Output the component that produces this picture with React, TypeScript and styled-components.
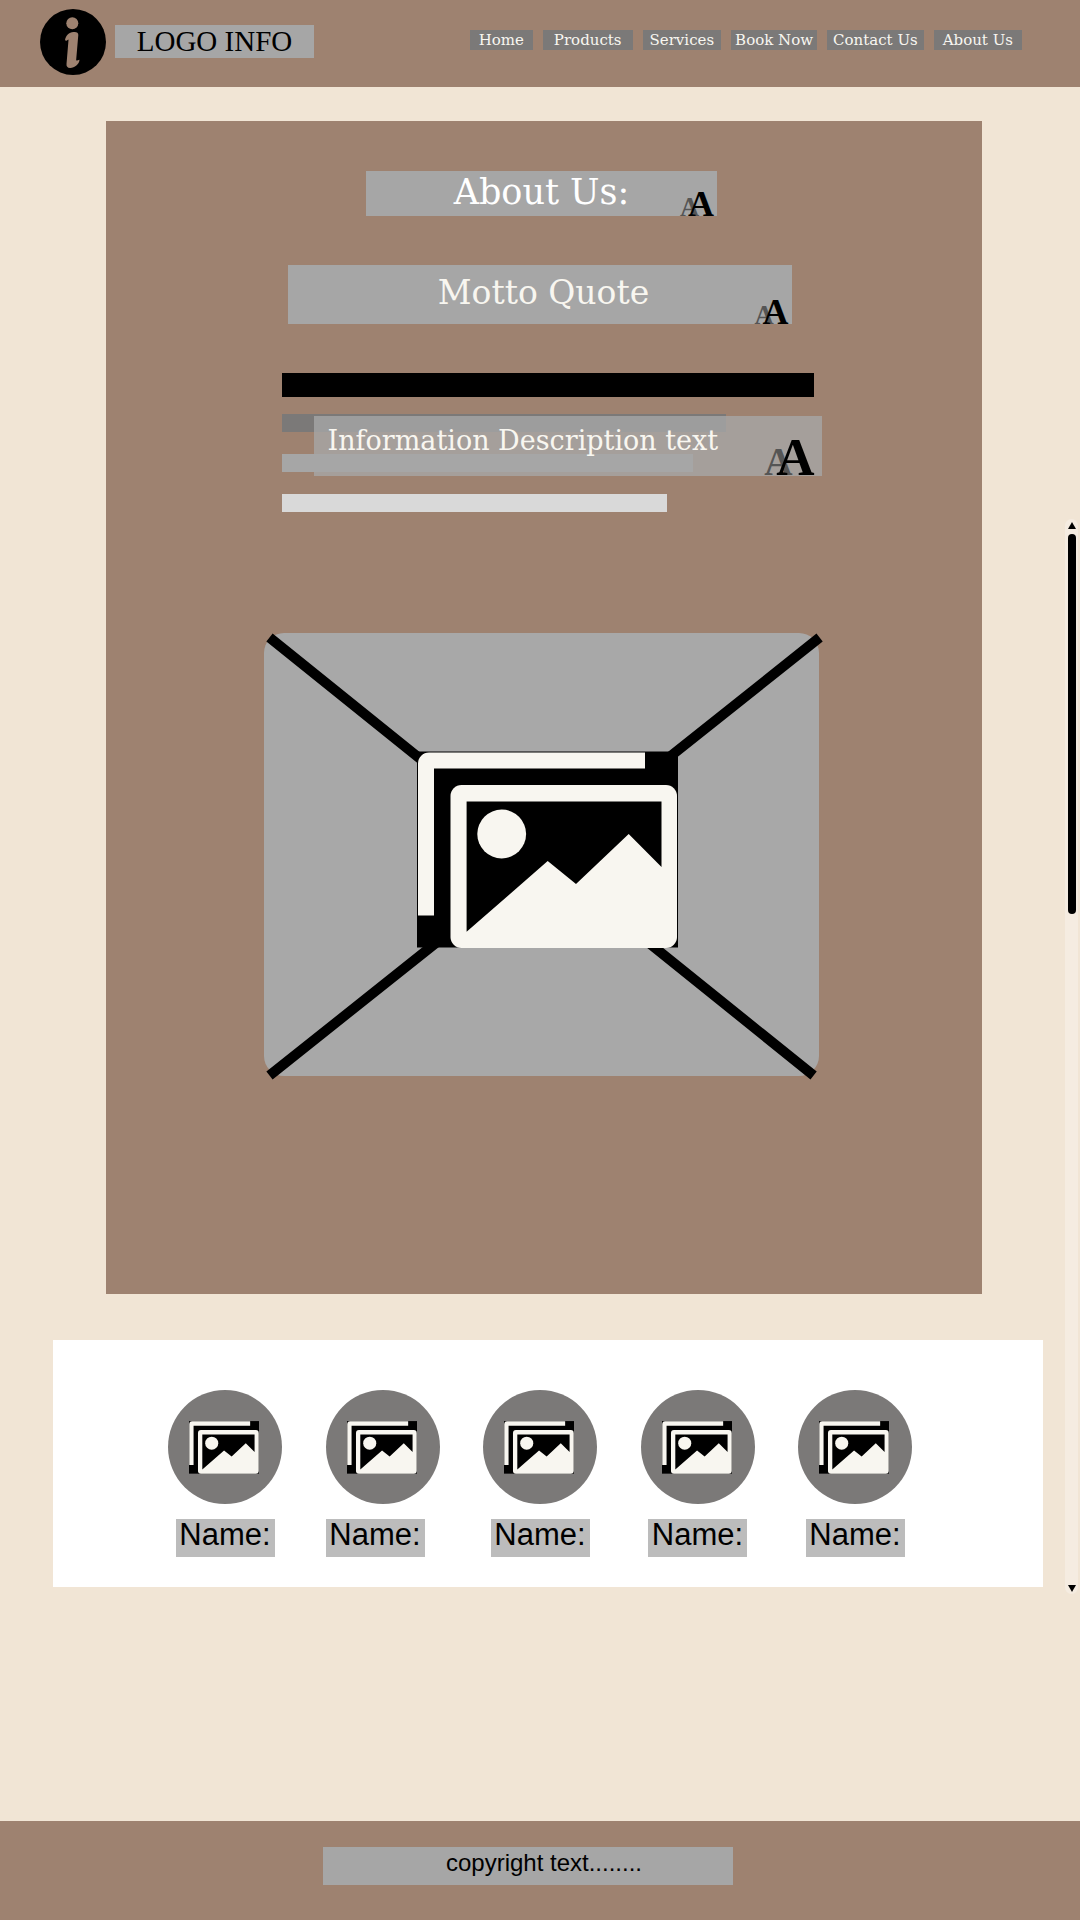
import React from "react";
import styled, { createGlobalStyle } from "styled-components";

const brown = "#9e8270";
const cream = "#f1e5d5";
const grey = "#a6a6a6";
const darkGrey = "#7b7978";
const ivory = "#f8f6f0";
const serif = `"DejaVu Serif", "Liberation Serif", serif`;
const sans = `"Liberation Sans", Arial, sans-serif`;

const GlobalStyle = createGlobalStyle`
  *, *::before, *::after { box-sizing: border-box; }
  body { margin: 0; background: ${cream}; font-family: ${serif}; }
  h1, h2, p, ul, figure { margin: 0; padding: 0; font-weight: 400; }
`;

const Page = styled.div`
  display: flex;
  flex-direction: column;
  min-height: 100vh;
`;

const Header = styled.header`
  display: flex;
  align-items: center;
  justify-content: space-between;
  height: 87px;
  padding: 0 58px 4px 40px;
  background: ${brown};
`;

const Brand = styled.a`
  display: flex;
  align-items: center;
  gap: 9px;
  color: #000;
  text-decoration: none;
`;

const BrandName = styled.span`
  width: 199px;
  height: 33px;
  background: ${grey};
  font: 29px/32px "Liberation Serif", "Times New Roman", serif;
  text-align: center;
`;

const Nav = styled.nav`
  display: flex;
  gap: 10px;
  padding-bottom: 4px;
`;

const NavLink = styled.a<{ $pad: number }>`
  padding: 0 ${(p) => p.$pad}px;
  background: ${darkGrey};
  color: ${ivory};
  font-size: 15px;
  line-height: 20px;
  text-decoration: none;
  white-space: nowrap;
`;

const Body = styled.div`
  display: grid;
  grid-template-columns: minmax(0, 1fr) 13px;
  flex: 1;
  padding-right: 2px;
`;

const Main = styled.main`
  display: flex;
  flex-direction: column;
  gap: 46px;
  padding: 34px 22px 234px 53px;
`;

const Card = styled.section`
  display: flex;
  flex-direction: column;
  align-items: center;
  margin: 0 61px 0 53px;
  padding: 50px 5px 218px 0;
  background: ${brown};
`;

const Title = styled.h1`
  position: relative;
  width: 351px;
  max-width: 100%;
  padding-bottom: 2px;
  background: ${grey};
  color: #fff;
  font-size: 35px;
  line-height: 43px;
  text-align: center;
`;

const Motto = styled.p`
  position: relative;
  width: 504px;
  max-width: 100%;
  margin: 49px 4px 0 0;
  padding: 0 0 3px 8px;
  background: ${grey};
  color: ${ivory};
  font-size: 33px;
  line-height: 56px;
  text-align: center;
`;

const Description = styled.div`
  position: relative;
  width: 540px;
  max-width: 100%;
  margin: 49px 0 0 20px;
`;

const Bar = styled.div<{ $color: string; $width: number; $height: number; $gap: number }>`
  width: ${(p) => p.$width}px;
  max-width: 100%;
  height: ${(p) => p.$height}px;
  margin-top: ${(p) => p.$gap}px;
  background: ${(p) => p.$color};
`;

const DescriptionText = styled.p`
  position: absolute;
  top: 43px;
  left: 32px;
  width: 508px;
  height: 60px;
  padding-left: 14px;
  background: rgba(166, 166, 166, 0.8);
  color: ${ivory};
  font-size: 27px;
  line-height: 50px;
`;

const TypeMark = styled.span<{ $size: number; $inset: number }>`
  position: absolute;
  right: ${(p) => p.$inset}px;
  bottom: 0;
  display: flex;
  align-items: baseline;
  color: #000;
  font: 700 ${(p) => p.$size}px/0.68 "Liberation Serif", "Times New Roman", serif;
`;

const SmallLetter = styled.span`
  margin-right: -0.42em;
  color: #555;
  font-size: 0.74em;
`;

const LargeLetter = styled.span`
  position: relative;
`;

const Picture = styled.figure`
  display: grid;
  place-items: center;
  width: 555px;
  max-width: 100%;
  margin-top: 121px;
  border-radius: 20px;
  background: #a8a8a8;
`;

const PictureArt = styled.svg`
  display: block;
  width: 100%;
  overflow: visible;
`;

const Team = styled.ul`
  display: flex;
  justify-content: space-between;
  padding: 50px 131px 30px 115px;
  background: #fff;
  list-style: none;
`;

const Member = styled.li<{ $align: "center" | "flex-start" }>`
  display: flex;
  flex-direction: column;
  align-items: ${(p) => p.$align};
  gap: 15px;
  width: 114px;
`;

const Avatar = styled.div`
  display: grid;
  place-items: center;
  width: 114px;
  height: 114px;
  padding-right: 2px;
  border-radius: 50%;
  background: ${darkGrey};
`;

const MemberName = styled.span`
  width: 99px;
  height: 38px;
  background: #bcbcbc;
  color: #000;
  font: 31px/32px ${sans};
  text-align: center;
`;

const Scrollbar = styled.div`
  display: flex;
  flex-direction: column;
  align-items: center;
  justify-content: space-between;
  margin: 432px 0 227px;
  padding: 3px 0 2px;
  border-radius: 7px;
  background: #f5ece1;
`;

const ScrollTrack = styled.div`
  flex: 1;
  width: 8px;
  padding: 5px 0;
`;

const ScrollThumb = styled.div`
  height: 380px;
  border-radius: 4px;
  background: #000;
`;

const ScrollButton = styled.button`
  display: block;
  padding: 0;
  border: 0;
  background: none;
  line-height: 0;
`;

const Footer = styled.footer`
  display: flex;
  justify-content: center;
  padding: 26px 24px 35px 0;
  background: ${brown};
`;

const Copyright = styled.p`
  width: 410px;
  height: 38px;
  padding-left: 32px;
  background: ${grey};
  color: #000;
  font: 24px/32px ${sans};
  text-align: center;
`;

const links = [
  { label: "Home", pad: 9 },
  { label: "Products", pad: 11 },
  { label: "Services", pad: 7 },
  { label: "Book Now", pad: 4 },
  { label: "Contact Us", pad: 6 },
  { label: "About Us", pad: 9 },
];

const bars = [
  { color: "#000", width: 532, height: 24, gap: 0 },
  { color: darkGrey, width: 444, height: 18, gap: 17 },
  { color: grey, width: 411, height: 18, gap: 22 },
  { color: "#d9d9d9", width: 385, height: 18, gap: 22 },
];

const members: { id: number; align: "center" | "flex-start" }[] = [
  { id: 1, align: "center" },
  { id: 2, align: "flex-start" },
  { id: 3, align: "center" },
  { id: 4, align: "center" },
  { id: 5, align: "center" },
];

function Logo() {
  return (
    <svg width="66" height="66" viewBox="0 0 66 66" aria-hidden="true">
      <circle cx="33" cy="33" r="33" fill="#000" />
      <circle cx="32.3" cy="14.3" r="6" fill={brown} />
      <path
        d="M25 31.3C25.5 27 29 23.2 33.5 23C36.500 22.700 38.500 23.500 38.300 26L36.200 50.500C36.100 52.300 37.200 51.300 39.500 50.800C39.300 55.500 34.500 58.800 30.300 58.900C27.500 59 26.300 57.500 26.500 55L28.500 31C28.600 29.500 27.500 31.500 26.300 31.800Z"
        fill={brown}
      />
    </svg>
  );
}

function PhotoShapes() {
  return (
    <>
      <rect width="261" height="196" fill="#000" />
      <path d="M1 164V12A11 11 0 0 1 12 1H228V17H17V164Z" fill={ivory} />
      <rect x="33.500" y="33.500" width="226.500" height="163" rx="11" fill={ivory} />
      <path d="M49.600 50H244.500V115.500L211.700 82.500L159 132.500L130.700 109.500L49.600 180.300Z" fill="#000" />
      <circle cx="84.700" cy="82.500" r="24.400" fill={ivory} />
    </>
  );
}

function Letters({ size, inset }: { size: number; inset: number }) {
  return (
    <TypeMark $size={size} $inset={inset} aria-hidden="true">
      <SmallLetter>A</SmallLetter>
      <LargeLetter>A</LargeLetter>
    </TypeMark>
  );
}

export default function App() {
  return (
    <Page>
      <GlobalStyle />
      <Header>
        <Brand href="#">
          <Logo />
          <BrandName>LOGO INFO</BrandName>
        </Brand>
        <Nav>
          {links.map((link) => (
            <NavLink key={link.label} href="#" $pad={link.pad}>
              {link.label}
            </NavLink>
          ))}
        </Nav>
      </Header>
      <Body>
        <Main>
          <Card>
            <Title>
              About Us:
              <Letters size={36} inset={3} />
            </Title>
            <Motto>
              Motto Quote
              <Letters size={36} inset={3} />
            </Motto>
            <Description>
              {bars.map((bar) => (
                <Bar key={bar.color} $color={bar.color} $width={bar.width} $height={bar.height} $gap={bar.gap} />
              ))}
              <DescriptionText>
                Information Description text
                <Letters size={53} inset={7} />
              </DescriptionText>
            </Description>
            <Picture>
              <PictureArt viewBox="0 0 555 443" role="img" aria-label="Picture placeholder">
                <path d="M5.500 4.500L549.600 442.500M555.600 4.500L5.500 442.500" stroke="#000" strokeWidth="10" />
                <g transform="translate(153 118.500)">
                  <PhotoShapes />
                </g>
              </PictureArt>
            </Picture>
          </Card>
          <Team>
            {members.map((member) => (
              <Member key={member.id} $align={member.align}>
                <Avatar>
                  <svg width="70" height="53" viewBox="0 0 261 197" aria-hidden="true">
                    <PhotoShapes />
                  </svg>
                </Avatar>
                <MemberName>Name:</MemberName>
              </Member>
            ))}
          </Team>
        </Main>
        <Scrollbar>
          <ScrollButton aria-label="Scroll up">
            <svg width="8" height="7" viewBox="0 0 8 7">
              <path d="M4 0L8 7H0Z" />
            </svg>
          </ScrollButton>
          <ScrollTrack>
            <ScrollThumb />
          </ScrollTrack>
          <ScrollButton aria-label="Scroll down">
            <svg width="8" height="7" viewBox="0 0 8 7">
              <path d="M0 0H8L4 7Z" />
            </svg>
          </ScrollButton>
        </Scrollbar>
      </Body>
      <Footer>
        <Copyright>copyright text........</Copyright>
      </Footer>
    </Page>
  );
}
